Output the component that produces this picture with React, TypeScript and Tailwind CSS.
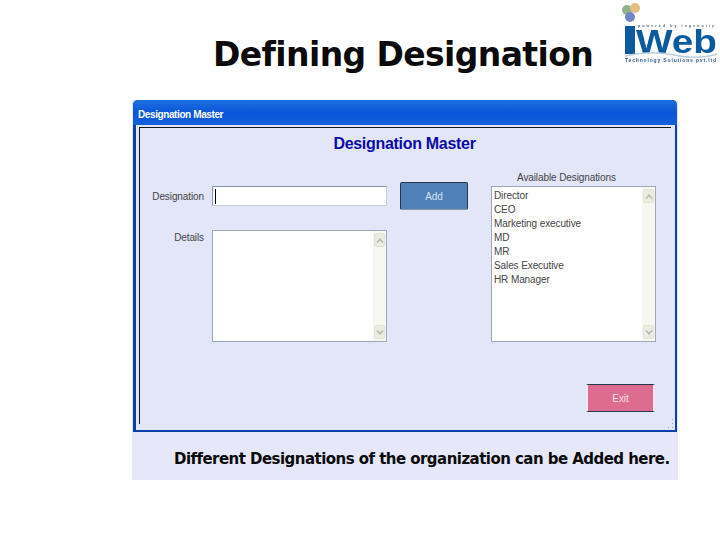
function ScrollBar() {
  return (
    <div className="flex w-[13px] flex-col justify-between bg-[#f7f7f2] px-px py-[2px]">
      <div className="flex h-[14px] items-center justify-center rounded-[2px] border border-[#e0e4d8] bg-[#e9ecdf]">
        <svg width="8" height="5" viewBox="0 0 8 5" fill="none" stroke="#b4b9aa" strokeWidth="1.5">
          <path d="M1 4.5 L4 1.2 L7 4.5" />
        </svg>
      </div>
      <div className="flex h-[14px] items-center justify-center rounded-[2px] border border-[#e0e4d8] bg-[#e9ecdf]">
        <svg width="8" height="5" viewBox="0 0 8 5" fill="none" stroke="#b4b9aa" strokeWidth="1.5">
          <path d="M1 0.5 L4 3.8 L7 0.5" />
        </svg>
      </div>
    </div>
  );
}

function Logo() {
  return (
    <svg width="100" height="66" viewBox="0 0 100 66" className="blur-[0.5px]">
      <circle cx="7" cy="10" r="5" fill="#8fb38a" />
      <circle cx="15" cy="8" r="5" fill="#e2bd80" />
      <circle cx="10" cy="17" r="5" fill="#6f86c8" />
      <rect x="5" y="26" width="10" height="28" fill="#0b5a9e" />
      <text x="16" y="53" fontFamily="Liberation Sans, sans-serif" fontWeight="700" fontSize="34" fill="#0b5a9e" textLength="81" lengthAdjust="spacingAndGlyphs">
        Web
      </text>
      <text x="18" y="27" fontFamily="Liberation Sans, sans-serif" fontWeight="700" fontSize="3.5" fill="#55606e" textLength="76">
        powered by ingenuity
      </text>
      <path d="M5 56 Q30 50 54 55 T97 54" fill="none" stroke="#b9cfe0" strokeWidth="1.5" />
      <text x="5" y="62" fontFamily="Liberation Sans, sans-serif" fontWeight="700" fontSize="5" fill="#2b5c86" textLength="91">
        Technology Solutions pvt.ltd
      </text>
    </svg>
  );
}

const designations = ["Director", "CEO", "Marketing executive", "MD", "MR", "Sales Executive", "HR Manager"];

export default function App() {
  return (
    <div className="h-[540px] w-[720px] overflow-hidden bg-white font-['Liberation_Sans',sans-serif]">
      {/* Slide header */}
      <div className="flex h-[100px] items-start">
        <h1 className="ml-[213px] mt-[33px] w-[407px] font-['DejaVu_Sans',sans-serif] text-[33px] leading-[44px] font-bold tracking-[-0.6px] whitespace-nowrap text-[#0a0a0a]">
          Defining Designation
        </h1>
        <Logo />
      </div>

      {/* Screenshot panel */}
      <div className="ml-[132px] h-[380px] w-[546px] bg-[#e6e8fa]">
        <div className="ml-px flex h-[332px] w-[544px] flex-col rounded-t-[5px] bg-[#0a3fb0] pl-[3px] pr-[2px] pb-[2px]">
          <div className="-ml-[3px] -mr-[2px] h-[25px] rounded-t-[5px] bg-gradient-to-b from-[#1e6fe0] via-[#0a55d8] to-[#1460dc] pl-[5px] pt-[8px] text-[10px] leading-[14px] font-bold tracking-[-0.4px] text-white">
            Designation Master
          </div>
          <div className="relative flex flex-1 flex-col bg-[#e3e5f8] pl-[3px] pt-[2px] pr-[4px] pb-[6px]">
            <div className="flex-1 border-t border-l border-[#10142a]">
              <div className="pt-[7px] text-center text-[16px] leading-[18px] font-bold tracking-[-0.3px] text-[#0a0aa6]">
                <span className="ml-[-2px]">Designation Master</span>
              </div>

              <div className="mt-[17px] flex text-[10px] tracking-[-0.1px] text-[#444]">
                {/* Left fields */}
                <div className="grid w-[247px] grid-cols-[64px_175px] grid-rows-[20px_112px] gap-x-[8px] gap-y-[24px] pt-[16px]">
                  <label className="pt-[3px] text-right whitespace-nowrap">Designation</label>
                  <div className="flex items-center border border-[#8a97a8] border-r-[#c8cdd6] border-b-[#c8cdd6] bg-white pl-[2px]">
                    <div className="h-[15px] w-px bg-black" />
                  </div>
                  <label className="text-right">Details</label>
                  <div className="flex border border-[#9aa8b8] bg-white">
                    <div className="flex-1" />
                    <ScrollBar />
                  </div>
                </div>

                <div className="ml-[13px] w-[68px] pt-[12px]">
                  <button className="flex h-[28px] w-[68px] items-center justify-center rounded-[2px] border border-[#27364e] border-b-[#8794a8] bg-[#4f81b8] text-[#cfe0f0]">
                    Add
                  </button>
                </div>

                {/* Right list */}
                <div className="ml-[23px] flex w-[165px] flex-col pt-px">
                  <div className="h-[14px] pl-[26px] leading-[14px] whitespace-nowrap">Available Designations</div>
                  <div className="mt-px flex h-[156px] border border-[#9aa8b8] bg-white">
                    <div className="flex-1 pl-[2px] pt-[2px] leading-[14px]">
                      {designations.map((d) => (
                        <div key={d}>{d}</div>
                      ))}
                    </div>
                    <ScrollBar />
                  </div>
                  <button className="ml-[95px] mt-[42px] flex h-[28px] w-[69px] items-center justify-center border-x-2 border-y border-x-[#f5e8ee] border-y-[#27364e] bg-[#dd6d90] text-[#f6dfe8]">
                    Exit
                  </button>
                </div>
              </div>
            </div>
            <svg width="10" height="12" viewBox="0 0 10 12" fill="#9aa3b8" className="absolute right-0 bottom-0">
              <rect x="7" y="1" width="1" height="1" />
              <rect x="7" y="5" width="1" height="1" />
              <rect x="3" y="9" width="1" height="1" />
              <rect x="7" y="9" width="1" height="1" />
            </svg>
          </div>
        </div>
        <p className="ml-[42px] mt-[17px] font-['DejaVu_Sans',sans-serif] text-[15px] leading-[20px] font-bold tracking-[-0.54px] whitespace-nowrap text-[#0a0a0a]">
          Different Designations of the organization can be Added here.
        </p>
      </div>
    </div>
  );
}
